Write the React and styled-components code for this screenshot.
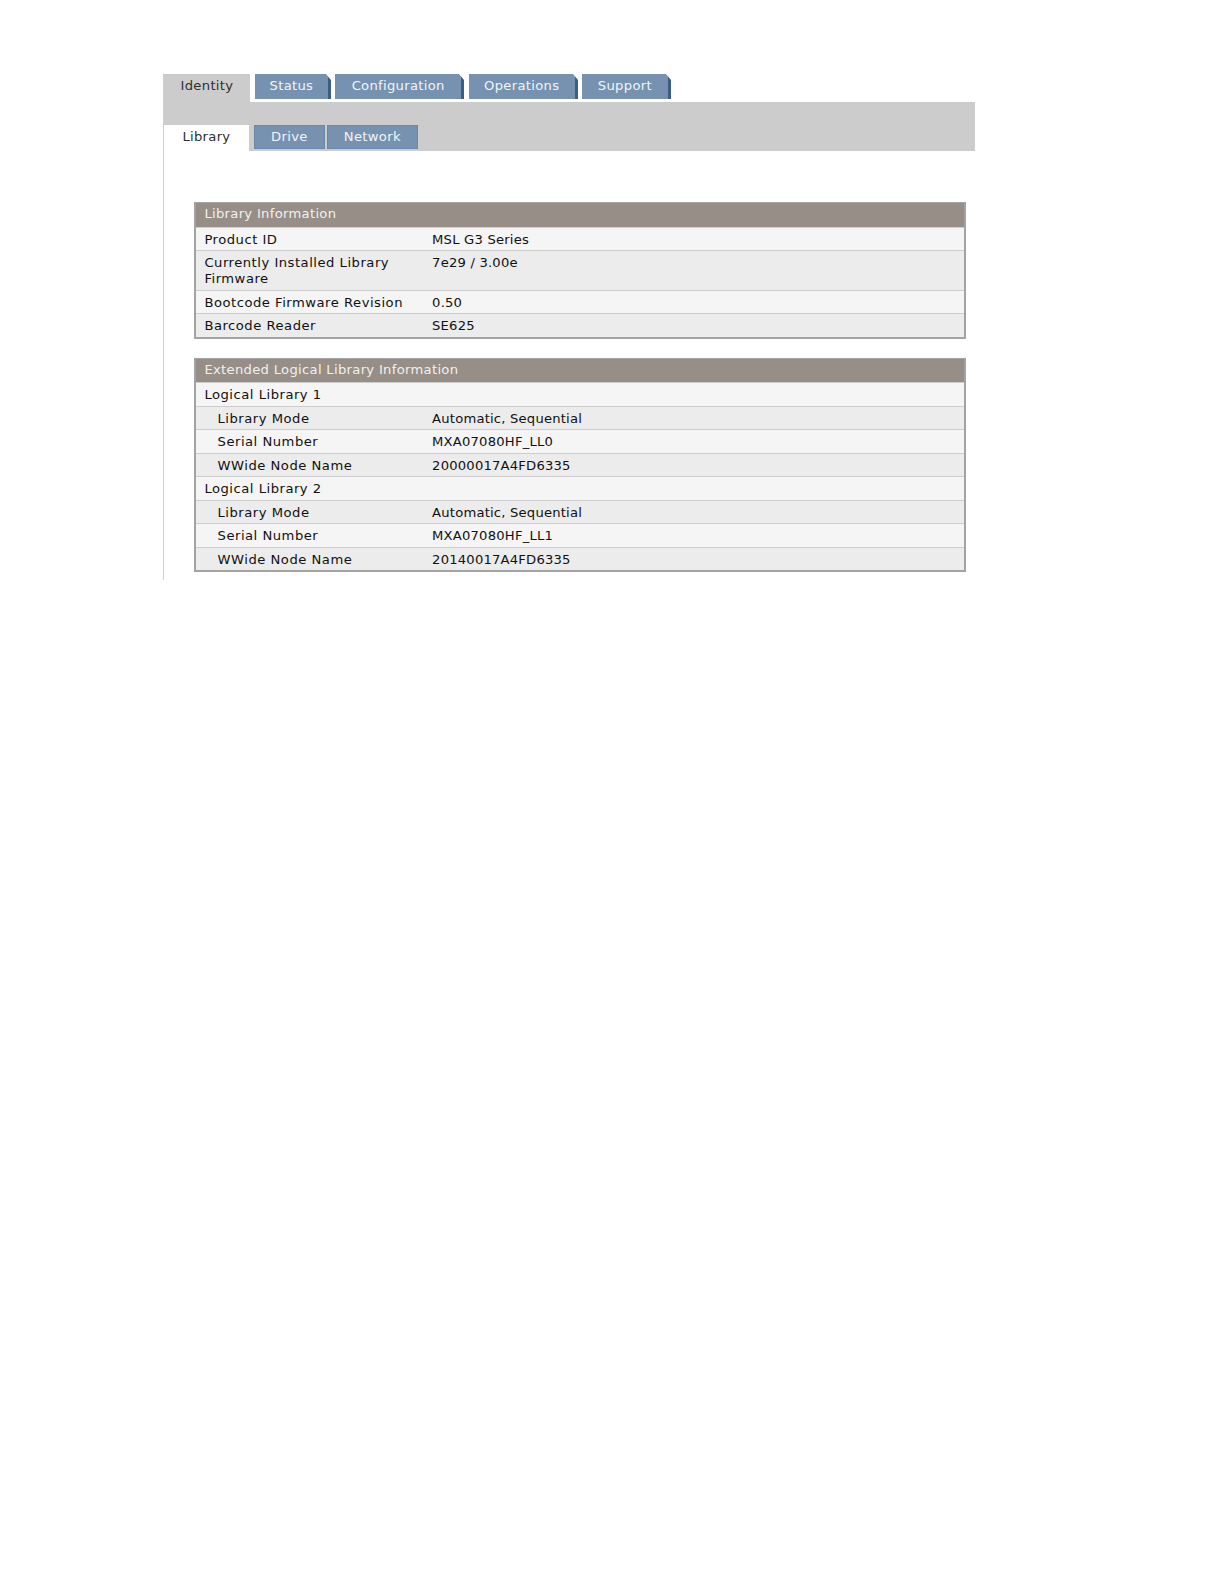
import React from "react";
import styled, { createGlobalStyle } from "styled-components";

const Global = createGlobalStyle`
  html, body { margin: 0; padding: 0; background: #ffffff; }
  body { font-family: "DejaVu Sans", "Liberation Sans", sans-serif; }
`;

const Page = styled.div`
  box-sizing: border-box;
  padding: 73px 0 0 161px;
  zoom: 1.012;
`;

const Frame = styled.div`
  width: 801px;
  border-left: 1px solid #cfcfcf;
  padding-bottom: 8px;
`;

const TabRow = styled.div`
  display: flex;
  align-items: flex-end;
  height: 28px;
`;

const TopTab = styled.div`
  position: relative;
  box-sizing: border-box;
  height: ${(p) => (p.$active ? "28px" : "25px")};
  align-self: flex-start;
  width: ${(p) => p.$w}px;
  margin-right: ${(p) => (p.$active ? 5 : 4)}px;
  padding-top: 4px;
  text-align: center;
  font-size: 13px;
  letter-spacing: 0.3px;
  color: ${(p) => (p.$active ? "#2f2f2f" : "#f1f4f8")};
  background: ${(p) => (p.$active ? "#cccccc" : "#7692b0")};
  border-right: ${(p) => (p.$active ? "none" : "3px solid #3b5d86")};
  ${(p) =>
    !p.$active &&
    `
    &::after {
      content: "";
      position: absolute;
      top: 0;
      right: -3px;
      width: 0;
      height: 0;
      border-top: 6px solid #ffffff;
      border-left: 5px solid transparent;
    }
  `}
`;

const Bar = styled.div`
  height: 48px;
  background: #cccccc;
  display: flex;
  align-items: flex-end;
`;

const SubTab = styled.div`
  box-sizing: border-box;
  width: ${(p) => p.$w}px;
  height: ${(p) => (p.$active ? "25px" : "23px")};
  margin-right: ${(p) => p.$mr}px;
  margin-bottom: ${(p) => (p.$active ? "0" : "2px")};
  padding-top: ${(p) => (p.$active ? "3px" : "2px")};
  text-align: center;
  font-size: 13px;
  letter-spacing: 0.3px;
  color: ${(p) => (p.$active ? "#2f2f2f" : "#f1f4f8")};
  background: ${(p) => (p.$active ? "#ffffff" : "#7692b0")};
  border: ${(p) => (p.$active ? "none" : "1px solid #6a88aa")};
`;

const Content = styled.div`
  padding: 51px 8px 0 30px;
  display: flex;
  flex-direction: column;
  gap: 19px;
`;

const Table = styled.div`
  border: 2px solid #a3a3a3;
  border-top: 1px solid #a3a3a3;
  background: #f4f4f4;
`;

const Header = styled.div`
  height: 23px;
  box-sizing: border-box;
  background: #968e87;
  color: #f2f0ee;
  font-size: 13px;
  letter-spacing: 0.3px;
  padding: 3px 0 0 8px;
`;

const Row = styled.div`
  display: grid;
  grid-template-columns: 233px 1fr;
  box-sizing: border-box;
  border-top: 1px solid #cdcdcd;
  background: ${(p) => (p.$alt ? "#ececec" : "#f5f5f5")};
  font-size: 13px;
  letter-spacing: 0.5px;
  line-height: 16px;
  color: #111111;
  padding: 4px 0 2.25px;
`;

const Label = styled.div`
  padding-left: ${(p) => (p.$indent ? 21 : 8)}px;
  padding-right: 8px;
`;

const Value = styled.div`
  letter-spacing: 0.2px;
`;

const topTabs = [
  { t: "Identity", w: 85, active: true },
  { t: "Status", w: 75 },
  { t: "Configuration", w: 128 },
  { t: "Operations", w: 108 },
  { t: "Support", w: 88 },
];

const subTabs = [
  { t: "Library", w: 84, mr: 5, active: true },
  { t: "Drive", w: 70, mr: 2 },
  { t: "Network", w: 90, mr: 0 },
];

const libInfo = [
  ["Product ID", "MSL G3 Series"],
  ["Currently Installed Library Firmware", "7e29 / 3.00e"],
  ["Bootcode Firmware Revision", "0.50"],
  ["Barcode Reader", "SE625"],
];

const extInfo = [
  ["Logical Library 1", "", false],
  ["Library Mode", "Automatic, Sequential", true],
  ["Serial Number", "MXA07080HF_LL0", true],
  ["WWide Node Name", "20000017A4FD6335", true],
  ["Logical Library 2", "", false],
  ["Library Mode", "Automatic, Sequential", true],
  ["Serial Number", "MXA07080HF_LL1", true],
  ["WWide Node Name", "20140017A4FD6335", true],
];

export default function App() {
  return (
    <Page>
      <Global />
      <Frame>
        <TabRow>
          {topTabs.map((t) => (
            <TopTab key={t.t} $w={t.w} $active={t.active}>
              {t.t}
            </TopTab>
          ))}
        </TabRow>
        <Bar>
          {subTabs.map((t) => (
            <SubTab key={t.t} $w={t.w} $mr={t.mr} $active={t.active}>
              {t.t}
            </SubTab>
          ))}
        </Bar>
        <Content>
          <Table>
            <Header>Library Information</Header>
            {libInfo.map(([l, v], i) => (
              <Row key={l} $alt={i % 2 === 1}>
                <Label>{l}</Label>
                <Value>{v}</Value>
              </Row>
            ))}
          </Table>
          <Table>
            <Header>Extended Logical Library Information</Header>
            {extInfo.map(([l, v, ind], i) => (
              <Row key={i} $alt={i % 2 === 1}>
                <Label $indent={ind}>{l}</Label>
                <Value>{v}</Value>
              </Row>
            ))}
          </Table>
        </Content>
      </Frame>
    </Page>
  );
}
